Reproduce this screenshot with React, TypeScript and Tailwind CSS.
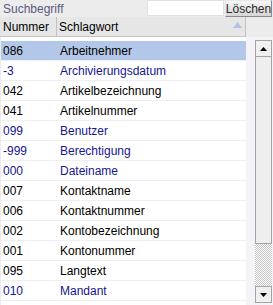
import React from "react";

const rows: { n: string; w: string; blue: boolean }[] = [
  { n: "086", w: "Arbeitnehmer", blue: false },
  { n: "-3", w: "Archivierungsdatum", blue: true },
  { n: "042", w: "Artikelbezeichnung", blue: false },
  { n: "041", w: "Artikelnummer", blue: false },
  { n: "099", w: "Benutzer", blue: true },
  { n: "-999", w: "Berechtigung", blue: true },
  { n: "000", w: "Dateiname", blue: true },
  { n: "007", w: "Kontaktname", blue: false },
  { n: "006", w: "Kontaktnummer", blue: false },
  { n: "002", w: "Kontobezeichnung", blue: false },
  { n: "001", w: "Kontonummer", blue: false },
  { n: "095", w: "Langtext", blue: false },
  { n: "010", w: "Mandant", blue: true },
];

export default function App() {
  return (
    <div className="w-[273px] h-[305px] overflow-hidden bg-[#ececec] flex flex-col font-['Liberation_Sans',Arial,sans-serif] text-[12px] leading-none">
      {/* top search row */}
      <div className="h-[17px] flex items-start shrink-0">
        <span className="flex-1 pl-[3px] pt-[3px] text-[#5a5a7e]">Suchbegriff</span>
        <div className="w-[77px] h-[16px] bg-white border border-[#e2e2e2]" />
        <button className="ml-[1px] w-[47px] h-[17px] flex items-center justify-center text-[#2a2a2a] bg-gradient-to-b from-[#f6f6f6] to-[#d6d6d6] border-r border-b border-[#8a8a8a] border-t border-l border-t-[#e8e8e8] border-l-[#e8e8e8]">
          Löschen
        </button>
        <div className="w-[1px]" />
      </div>
      {/* header */}
      <div className="h-[20px] flex shrink-0">
        <div className="w-[246px] flex bg-[#e6e6e6] border-b border-r border-[#c2c2c2] relative">
          <div className="w-[57px] border-r border-[#c2c2c2] pl-[3px] flex items-center text-[#000]">Nummer</div>
          <div className="flex-1 pl-[2px] flex items-center text-[#000]">Schlagwort</div>
          <svg className="absolute left-[233px] top-[5px]" width="9" height="6" viewBox="0 0 9 6">
            <polygon points="4.5,0 9,6 0,6" fill="#b0c4e4" />
          </svg>
        </div>
        <div className="flex-1 bg-[#ececec]" />
      </div>
      {/* body */}
      <div className="flex flex-1 min-h-0">
        <div className="w-[246px] bg-white pt-[4px] border-l border-[#ececf0]">
          {rows.map((r, i) => (
            <div
              key={i}
              className={
                "h-[20px] flex items-center border-b border-[#eeeef4] " +
                (i === 0 ? "bg-[#b3c8e8] " : "") +
                (r.blue ? "text-[#16168e]" : "text-[#000]")
              }
            >
              <div className="w-[56px] pl-[2px]">{r.n}</div>
              <div className="flex-1 pl-[3px] whitespace-nowrap">{r.w}</div>
            </div>
          ))}
        </div>
        <div className="w-[9px] bg-[#f4f4f8]" />
        <div className="w-[17px] bg-[#f4f4f8] pt-[3px]">
          <div className="h-[263px] flex flex-col">
            <div className="h-[17px] border border-[#a4a4a4] bg-[#f0f0f0] flex items-center justify-center">
              <svg width="7" height="4" viewBox="0 0 7 4">
                <polygon points="3.5,0 7,4 0,4" fill="#000" />
              </svg>
            </div>
            <div className="h-[187px] border border-t-0 border-[#a4a4a4] bg-[#eeeeee]" />
            <div className="flex-1 bg-[image:repeating-conic-gradient(#c4c4c4_0_25%,#ffffff_0_50%)] bg-[length:2px_2px]" />
            <div className="h-[17px] border border-[#a4a4a4] bg-[#f0f0f0] flex items-center justify-center">
              <svg width="7" height="4" viewBox="0 0 7 4">
                <polygon points="0,0 7,0 3.5,4" fill="#000" />
              </svg>
            </div>
          </div>
        </div>
        <div className="w-[1px] bg-[#f4f4f8]" />
      </div>
    </div>
  );
}
